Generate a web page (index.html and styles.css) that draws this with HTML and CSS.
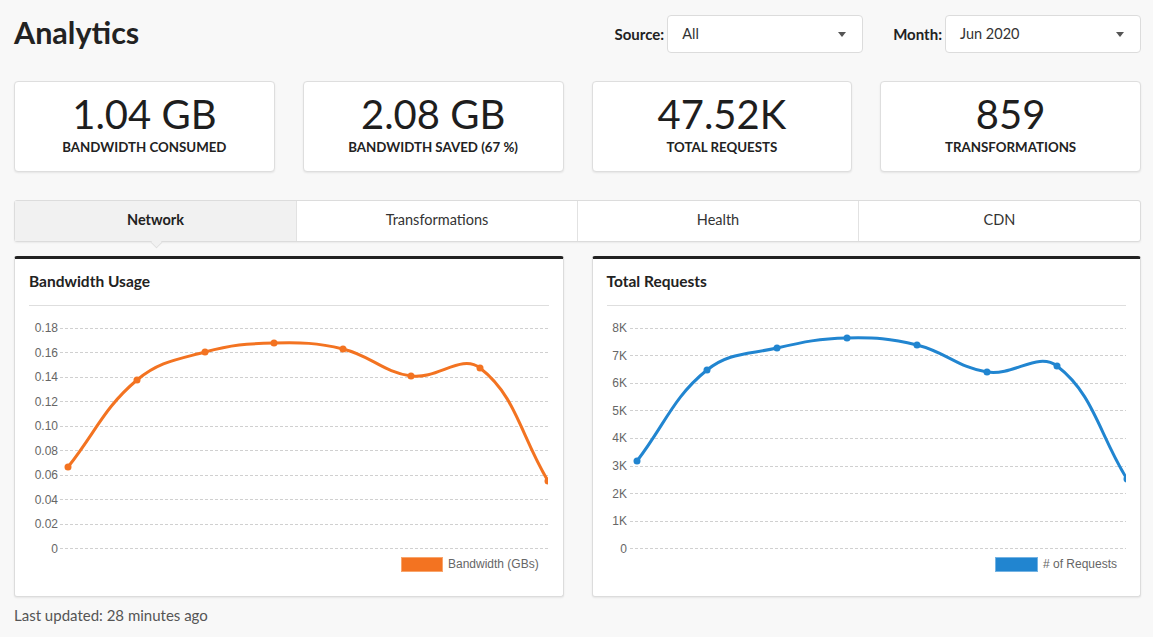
FILE: index.html
```html
<!DOCTYPE html>
<html lang="en">
<head>
<meta charset="utf-8">
<title>Analytics</title>
<link rel="stylesheet" href="styles.css">
</head>
<body>
<div class="page">
  <header class="topbar">
    <h1 class="title">Analytics</h1>
    <div class="filters">
      <div class="filter">
        <span class="filter-label">Source:</span>
        <div class="select"><span>All</span><span class="caret"></span></div>
      </div>
      <div class="filter">
        <span class="filter-label">Month:</span>
        <div class="select"><span>Jun 2020</span><span class="caret"></span></div>
      </div>
    </div>
  </header>

  <section class="stats">
    <div class="stat"><div class="stat-value">1.04 GB</div><div class="stat-label">BANDWIDTH CONSUMED</div></div>
    <div class="stat"><div class="stat-value">2.08 GB</div><div class="stat-label">BANDWIDTH SAVED (67 %)</div></div>
    <div class="stat"><div class="stat-value">47.52K</div><div class="stat-label">TOTAL REQUESTS</div></div>
    <div class="stat"><div class="stat-value">859</div><div class="stat-label">TRANSFORMATIONS</div></div>
  </section>

  <nav class="tabs">
    <div class="tab active">Network</div>
    <div class="tab">Transformations</div>
    <div class="tab">Health</div>
    <div class="tab">CDN</div>
  </nav>

  <section class="charts">
    <div class="chart-card">
      <div class="chart-head">Bandwidth Usage</div>
      <svg class="chart" width="519" height="275" viewBox="29 306 519 275">
        <defs><clipPath id="clipL"><rect x="29" y="306" width="520" height="275"/></clipPath></defs>
        <g class="grid">
          <line x1="60" y1="328.5" x2="548" y2="328.5"/>
          <line x1="60" y1="352.5" x2="548" y2="352.5"/>
          <line x1="60" y1="377.5" x2="548" y2="377.5"/>
          <line x1="60" y1="401.5" x2="548" y2="401.5"/>
          <line x1="60" y1="426.5" x2="548" y2="426.5"/>
          <line x1="60" y1="450.5" x2="548" y2="450.5"/>
          <line x1="60" y1="475.5" x2="548" y2="475.5"/>
          <line x1="60" y1="499.5" x2="548" y2="499.5"/>
          <line x1="60" y1="524.5" x2="548" y2="524.5"/>
          <line x1="60" y1="548.5" x2="548" y2="548.5"/>
        </g>
        <g class="ticks">
          <text x="58" y="332">0.18</text>
          <text x="58" y="356.5">0.16</text>
          <text x="58" y="381">0.14</text>
          <text x="58" y="405.5">0.12</text>
          <text x="58" y="430">0.10</text>
          <text x="58" y="454.5">0.08</text>
          <text x="58" y="479">0.06</text>
          <text x="58" y="503.5">0.04</text>
          <text x="58" y="528">0.02</text>
          <text x="58" y="552.5">0</text>
        </g>
        <g clip-path="url(#clipL)" class="series-orange">
          <path class="line" d="M68,467 C95.6,432.2 104,407.7 137,380 C158.8,361.7 176.9,359.6 205,352 C231.7,344.8 246.4,343.6 274,343 C301.6,342.4 316.3,342.6 343,349 C371.1,355.8 382.9,372.1 411,376 C437.7,379.7 461.1,353.5 480,368 C515.9,395.5 520.8,435.8 548,481"/>
          <circle cx="68" cy="467" r="3.5"/>
          <circle cx="137" cy="380" r="3.5"/>
          <circle cx="205" cy="352" r="3.5"/>
          <circle cx="274" cy="343" r="3.5"/>
          <circle cx="343" cy="349" r="3.5"/>
          <circle cx="411" cy="376" r="3.5"/>
          <circle cx="480" cy="368" r="3.5"/>
          <circle cx="548" cy="481" r="3.5"/>
        </g>
        <rect class="legend-orange" x="401.5" y="557.5" width="41" height="14"/>
        <text class="legend-text" x="448" y="568">Bandwidth (GBs)</text>
      </svg>
    </div>

    <div class="chart-card">
      <div class="chart-head">Total Requests</div>
      <svg class="chart" width="519" height="275" viewBox="606 306 519 275">
        <defs><clipPath id="clipR"><rect x="606" y="306" width="521" height="275"/></clipPath></defs>
        <g class="grid">
          <line x1="629" y1="328.5" x2="1126" y2="328.5"/>
          <line x1="629" y1="355.5" x2="1126" y2="355.5"/>
          <line x1="629" y1="383.5" x2="1126" y2="383.5"/>
          <line x1="629" y1="410.5" x2="1126" y2="410.5"/>
          <line x1="629" y1="438.5" x2="1126" y2="438.5"/>
          <line x1="629" y1="466.5" x2="1126" y2="466.5"/>
          <line x1="629" y1="493.5" x2="1126" y2="493.5"/>
          <line x1="629" y1="521.5" x2="1126" y2="521.5"/>
          <line x1="629" y1="548.5" x2="1126" y2="548.5"/>
        </g>
        <g class="ticks">
          <text x="626" y="332">8K</text>
          <text x="626" y="359.5">7K</text>
          <text x="626" y="387">6K</text>
          <text x="626" y="414.5">5K</text>
          <text x="626" y="442">4K</text>
          <text x="626" y="470">3K</text>
          <text x="626" y="497.5">2K</text>
          <text x="626" y="525">1K</text>
          <text x="626" y="552.5">0</text>
        </g>
        <g clip-path="url(#clipR)" class="series-blue">
          <path class="line" d="M636,461 C664,424.6 671.8,397.6 706,370 C727.8,352.4 747.4,354.5 776,348 C803.4,341.7 818,338.6 846,338 C874,337.4 888.8,338.4 916,345 C944.8,352 957.2,367.7 986,372 C1013.2,376.1 1036.7,351.2 1056,366 C1092.7,394 1098,433.8 1126,479"/>
          <circle cx="636" cy="461" r="3.5"/>
          <circle cx="706" cy="370" r="3.5"/>
          <circle cx="776" cy="348" r="3.5"/>
          <circle cx="846" cy="338" r="3.5"/>
          <circle cx="916" cy="345" r="3.5"/>
          <circle cx="986" cy="372" r="3.5"/>
          <circle cx="1056" cy="366" r="3.5"/>
          <circle cx="1126" cy="479" r="3.5"/>
        </g>
        <rect class="legend-blue" x="994.5" y="557.5" width="42" height="14"/>
        <text class="legend-text" x="1042" y="568"># of Requests</text>
      </svg>
    </div>
  </section>

  <p class="updated">Last updated: 28 minutes ago</p>
</div>
</body>
</html>
```

FILE: styles.css
```css
* { box-sizing: border-box; }

html, body {
  margin: 0;
  padding: 0;
  background: #f8f8f8;
}

body {
  font-family: Lato, "Noto Sans", sans-serif;
  color: #222;
}

.page {
  padding: 15px 12px 0 14px;
}

.topbar {
  display: flex;
  align-items: center;
  justify-content: space-between;
  height: 38px;
}

.title {
  margin: 0 0 5px 0;
  font-size: 30.5px;
  font-weight: 700;
  color: #222;
  line-height: 38px;
}

.filters {
  display: flex;
  align-items: center;
  gap: 30px;
}

.filter {
  display: flex;
  align-items: center;
  gap: 3px;
}

.filter-label {
  font-size: 15px;
  font-weight: 700;
  color: #222;
}

.select {
  width: 196px;
  height: 38px;
  background: #fff;
  border: 1px solid #dcdcdc;
  border-radius: 4px;
  display: flex;
  align-items: center;
  justify-content: space-between;
  padding: 0 16px 2px 14px;
  font-size: 14.5px;
  color: #333;
}

.caret {
  width: 0;
  height: 0;
  margin-top: 2px;
  border-left: 4px solid transparent;
  border-right: 4px solid transparent;
  border-top: 5px solid #555;
}

.stats {
  display: grid;
  grid-template-columns: repeat(4, 1fr);
  gap: 28px;
  margin-top: 28px;
}

.stat {
  height: 91px;
  background: #fff;
  border: 1px solid #dedede;
  border-radius: 4px;
  box-shadow: 0 1px 2px rgba(0, 0, 0, 0.08);
  display: flex;
  flex-direction: column;
  align-items: center;
  padding-top: 12px;
}

.stat-value {
  font-size: 40px;
  line-height: 40px;
  font-weight: 400;
  color: #1e1e1e;
}

.stat-label {
  font-size: 13.3px;
  line-height: 16px;
  font-weight: 700;
  color: #222;
  margin-top: 4.5px;
}

.tabs {
  display: grid;
  grid-template-columns: 281px 281px 281px 1fr;
  margin-top: 28px;
  height: 42px;
  background: #fff;
  border: 1px solid #dcdcdc;
  border-radius: 3px;
  box-shadow: 0 1px 2px rgba(0, 0, 0, 0.06);
}

.tab {
  position: relative;
  display: flex;
  align-items: center;
  justify-content: center;
  padding-bottom: 3px;
  font-size: 14.5px;
  color: #333;
  border-left: 1px solid #e2e2e2;
}

.tab:first-child {
  border-left: none;
}

.tab.active {
  background: #f1f1f1;
  font-weight: 700;
  color: #222;
}

.tab.active::after {
  content: "";
  position: absolute;
  left: 50%;
  bottom: -7px;
  width: 10px;
  height: 10px;
  margin-left: -5px;
  background: #f1f1f1;
  border-right: 1px solid #dcdcdc;
  border-bottom: 1px solid #dcdcdc;
  transform: rotate(45deg) scale(0.75, 0.75);
}

.charts {
  display: grid;
  grid-template-columns: 1fr 1fr;
  gap: 28px;
  margin-top: 14px;
}

.chart-card {
  min-width: 0;
  background: #fff;
  border: 1px solid #dcdcdc;
  border-top: 3px solid #222;
  border-radius: 3px;
  box-shadow: 0 1px 2px rgba(0, 0, 0, 0.08);
  padding: 0 14px 15px 14px;
}

.chart-head {
  padding: 13px 0 15px 0;
  font-size: 15.5px;
  line-height: 18px;
  font-weight: 700;
  color: #222;
  border-bottom: 1px solid #dedede;
}

.chart {
  display: block;
}

.grid line {
  stroke: #d0d0d0;
  stroke-width: 1;
  stroke-dasharray: 3 2;
}

.ticks text {
  font-family: "Liberation Sans", Arial, sans-serif;
  font-size: 12px;
  fill: #666;
  text-anchor: end;
}

.line {
  fill: none;
  stroke-width: 3;
  stroke-linejoin: round;
  stroke-linecap: round;
}

.series-orange .line { stroke: #f37321; }
.series-orange circle { fill: #f37321; }

.series-blue .line { stroke: #2185d0; }
.series-blue circle { fill: #2185d0; }

.legend-orange {
  fill: #f37321;
  stroke: #f8a56c;
  stroke-width: 1;
}

.legend-blue {
  fill: #2185d0;
  stroke: #74b3e3;
  stroke-width: 1;
}

.legend-text {
  font-family: "Liberation Sans", Arial, sans-serif;
  font-size: 12px;
  fill: #666;
}

.updated {
  margin: 9px 0 0 0;
  font-size: 15px;
  line-height: 18px;
  color: #555;
}
```
